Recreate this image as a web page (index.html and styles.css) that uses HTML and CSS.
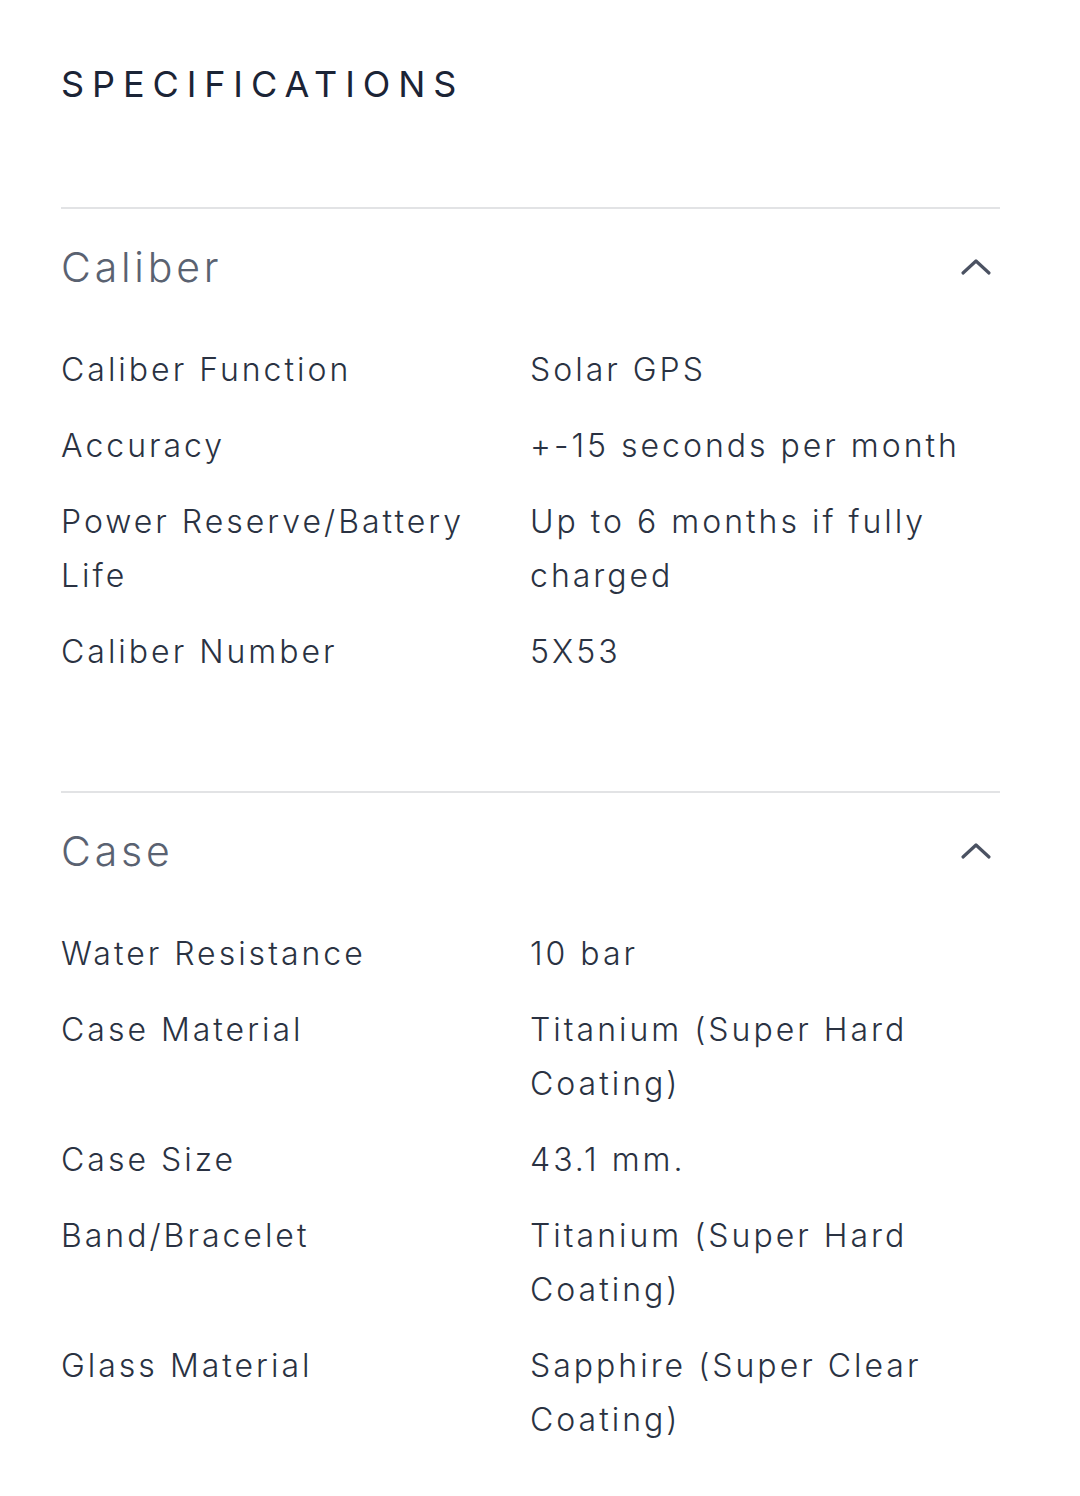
FILE: index.html
```html
<!DOCTYPE html>
<html>
<head>
<meta charset="utf-8">
<link rel="stylesheet" href="styles.css">
</head>
<body>
<main class="page">
  <h1 class="heading">SPECIFICATIONS</h1>

  <section class="group">
    <div class="group-head">
      <h2 class="group-title">Caliber</h2>
      <svg class="chevron" width="32" height="20" viewBox="0 0 32 20"><path d="M3 16 L16 4 L29 16" fill="none" stroke="#4b5262" stroke-width="3.2" stroke-linecap="round" stroke-linejoin="round"/></svg>
    </div>
    <dl class="specs">
      <div class="row"><dt>Caliber Function</dt><dd>Solar GPS</dd></div>
      <div class="row"><dt>Accuracy</dt><dd>+-15 seconds per month</dd></div>
      <div class="row"><dt>Power Reserve/Battery Life</dt><dd>Up to 6 months if fully charged</dd></div>
      <div class="row"><dt>Caliber Number</dt><dd>5X53</dd></div>
    </dl>
  </section>

  <section class="group">
    <div class="group-head">
      <h2 class="group-title">Case</h2>
      <svg class="chevron" width="32" height="20" viewBox="0 0 32 20"><path d="M3 16 L16 4 L29 16" fill="none" stroke="#4b5262" stroke-width="3.2" stroke-linecap="round" stroke-linejoin="round"/></svg>
    </div>
    <dl class="specs">
      <div class="row"><dt>Water Resistance</dt><dd>10 bar</dd></div>
      <div class="row"><dt>Case Material</dt><dd>Titanium (Super Hard Coating)</dd></div>
      <div class="row"><dt>Case Size</dt><dd>43.1 mm.</dd></div>
      <div class="row"><dt>Band/Bracelet</dt><dd>Titanium (Super Hard Coating)</dd></div>
      <div class="row"><dt>Glass Material</dt><dd>Sapphire (Super Clear Coating)</dd></div>
    </dl>
  </section>
</main>
</body>
</html>
```

FILE: styles.css
```css
html, body {
  margin: 0;
  padding: 0;
  background: #ffffff;
}

.page {
  padding: 0 80px 0 61px;
  font-family: "Inter", "Open Sans", "Liberation Sans", sans-serif;
  font-weight: 300;
}

.heading {
  margin: 0;
  padding-top: 60px;
  height: 207px;
  box-sizing: border-box;
  font-size: 36px;
  line-height: 48px;
  font-weight: 400;
  letter-spacing: 7.9px;
  color: #1b2436;
}

.group {
  border-top: 2px solid #e2e3e5;
  padding-bottom: 112px;
}

.group:last-child {
  padding-bottom: 40px;
}

.group-head {
  display: flex;
  justify-content: space-between;
  align-items: center;
  height: 116px;
  padding-bottom: 18px;
}

.group-title {
  margin: 0;
  font-size: 41px;
  line-height: 60px;
  font-weight: 300;
  letter-spacing: 3.8px;
  color: #5a6271;
}

.chevron {
  margin-right: 8px;
}

.specs {
  margin: 0;
  display: flex;
  flex-direction: column;
  gap: 22px;
}

.row {
  display: grid;
  grid-template-columns: 469px 1fr;
}

.row dt, .row dd {
  margin: 0;
  font-size: 32px;
  line-height: 54px;
  letter-spacing: 3px;
  color: #2a3242;
}
```
